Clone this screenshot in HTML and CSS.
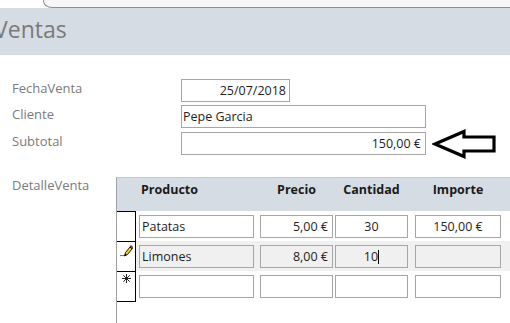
FILE: index.html
```html
<!DOCTYPE html>
<html lang="es">
<head>
<meta charset="utf-8">
<title>Ventas</title>
<link rel="stylesheet" href="styles.css">
</head>
<body>
<div class="topbar"><div class="tab"></div><div class="strip"></div></div>
<div class="header"><h1 class="title">Ventas</h1></div>

<div class="form">
  <div class="field-row">
    <span class="label">FechaVenta</span>
    <div class="box date">25/07/2018</div>
  </div>
  <div class="field-row r2">
    <span class="label">Cliente</span>
    <div class="box wide txt-left">Pepe Garcia</div>
  </div>
  <div class="field-row r3">
    <span class="label">Subtotal</span>
    <div class="box wide txt-right">150,00 €</div>
    <svg class="arrow" width="66" height="34" viewBox="0 0 66 34">
      <path d="M3 18 L32 5.5 L32 11 L62 11 L62 25 L32 25 L32 30.5 Z" fill="#fff" stroke="#000" stroke-width="3.2" stroke-linejoin="miter"/>
    </svg>
  </div>
</div>

<div class="detail">
  <span class="label detail-label">DetalleVenta</span>
  <div class="subform">
    <div class="sub-head">
      <span class="h-sel"></span>
      <span class="c-prod hp">Producto</span>
      <span class="c-precio hc">Precio</span>
      <span class="c-cant hc">Cantidad</span>
      <span class="c-imp hc">Importe</span>
    </div>
    <div class="sub-row">
      <div class="sel"></div>
      <div class="cell c-prod">Patatas</div>
      <div class="cell c-precio al-right">5,00 €</div>
      <div class="cell c-cant al-center">30</div>
      <div class="cell c-imp al-center">150,00 €</div>
    </div>
    <div class="sub-row current">
      <div class="sel">
        <svg class="pencil" width="13" height="13" viewBox="0 0 13 13">
          <rect x="0.5" y="11" width="1" height="1" fill="#000"/>
          <rect x="2.5" y="11" width="1" height="1" fill="#000"/>
          <path d="M4.5 12 L5.5 8.5 L10 3 L12 5 L7.5 10.5 Z" fill="#f2d21b" stroke="#000" stroke-width="0.9" stroke-linejoin="round"/>
          <path d="M10 3 L11 1.5 L13 3.5 L12 5 Z" fill="#e0201a" stroke="#000" stroke-width="0.7"/>
          <path d="M4.5 12 L5.2 9.6 L6.6 10.9 Z" fill="#000"/>
        </svg>
      </div>
      <div class="cell c-prod">Limones</div>
      <div class="cell c-precio al-right">8,00 €</div>
      <div class="cell c-cant al-center">10<span class="caret"></span></div>
      <div class="cell c-imp al-center"></div>
    </div>
    <div class="sub-row last">
      <div class="sel">
        <svg class="star" width="9" height="9" viewBox="0 0 9 9">
          <g stroke="#222" stroke-width="1">
            <line x1="4.5" y1="0" x2="4.5" y2="9"/>
            <line x1="0" y1="4.5" x2="9" y2="4.5"/>
            <line x1="1.3" y1="1.3" x2="7.7" y2="7.7"/>
            <line x1="7.7" y1="1.3" x2="1.3" y2="7.7"/>
          </g>
        </svg>
      </div>
      <div class="cell c-prod"></div>
      <div class="cell c-precio"></div>
      <div class="cell c-cant"></div>
      <div class="cell c-imp"></div>
    </div>
  </div>
</div>
</body>
</html>
```
FILE: styles.css
```css
* { box-sizing: border-box; }
html, body { margin: 0; padding: 0; }
body {
  width: 510px;
  height: 323px;
  overflow: hidden;
  background: #fff;
  font-family: "Open Sans", "Noto Sans", sans-serif;
}

/* top tab strip */
.topbar { display: flex; height: 8px; }
.tab { width: 43px; background: #fff; }
.strip {
  flex: 1;
  background: #f7f7f7;
  border-left: 1px solid #8e8e8e;
  border-bottom: 1px solid #8e8e8e;
  border-bottom-left-radius: 9px 7px;
}

/* header band */
.header {
  height: 47px;
  background: #d6dce4;
  padding-top: 6px;
}
.title {
  margin: 0 0 0 -6px;
  font-size: 23px;
  font-weight: normal;
  line-height: 30px;
  color: #7a7a7a;
}

/* main form */
.form { padding: 24px 0 0 12px; }
.field-row { display: flex; align-items: flex-start; }
.r2 { margin-top: 3px; }
.r3 { margin-top: 4px; }
.label {
  width: 169px;
  padding-top: 1px;
  font-size: 13px;
  line-height: 17px;
  color: #7a7a7a;
}
.box {
  height: 23px;
  border: 1px solid #a6a6a6;
  font-size: 12.5px;
  line-height: 21px;
  color: #1e1e1e;
  white-space: nowrap;
}
.date { width: 109px; text-align: right; padding-right: 3px; }
.wide { width: 245px; }
.txt-left { padding-left: 1px; }
.txt-right { text-align: right; padding-right: 4px; }
.arrow {
  display: block;
  margin: -6px 0 -5px 6px;
}

/* detail subform */
.detail { display: flex; margin-top: 22px; }
.detail-label { width: 116px; padding: 0 0 0 12px; flex-shrink: 0; }
.subform {
  flex: 1;
  height: 160px;
  border-left: 1px solid #a0a0a0;
  border-top: 1px solid #c9c9c9;
}
.sub-head {
  display: flex;
  height: 33px;
  padding-top: 3px;
  background: #d6dce4;
  font-size: 12.5px;
  font-weight: bold;
  line-height: 17px;
  color: #1a1a1a;
}
.h-sel { width: 19px; flex-shrink: 0; }
.hp { padding-left: 1px; }
.hc { text-align: center; }

.sub-row { display: flex; height: 30px; }
.sub-row.last { height: 31px; }
.sub-row.current { background: #f0f0f0; }
.sel {
  width: 19px;
  flex-shrink: 0;
  background: #fff;
  border-top: 1px solid #000;
  border-right: 1px solid #000;
  display: flex;
  justify-content: center;
  align-items: flex-start;
}
.last .sel { border-bottom: 1px solid #000; }
.current .sel { padding-top: 2px; }
.last .sel { padding-top: 2px; }
.pencil, .star { display: block; }

.cell {
  height: 23px;
  margin-top: 4px;
  border: 1px solid #a6a6a6;
  background: #fff;
  font-size: 12.5px;
  line-height: 21px;
  color: #1e1e1e;
  white-space: nowrap;
}
.current .cell { background: #f0f0f0; }

.c-prod { margin-left: 3px; width: 115px; flex-shrink: 0; padding-left: 2px; }
.c-precio { margin-left: 6px; width: 73px; flex-shrink: 0; }
.c-cant { margin-left: 2px; width: 73px; flex-shrink: 0; }
.c-imp { margin-left: 7px; width: 86px; flex-shrink: 0; }
.al-right { text-align: right; padding-right: 4px; }
.al-center { text-align: center; }
.caret {
  display: inline-block;
  width: 1px;
  height: 14px;
  background: #000;
  vertical-align: -3px;
}
```
